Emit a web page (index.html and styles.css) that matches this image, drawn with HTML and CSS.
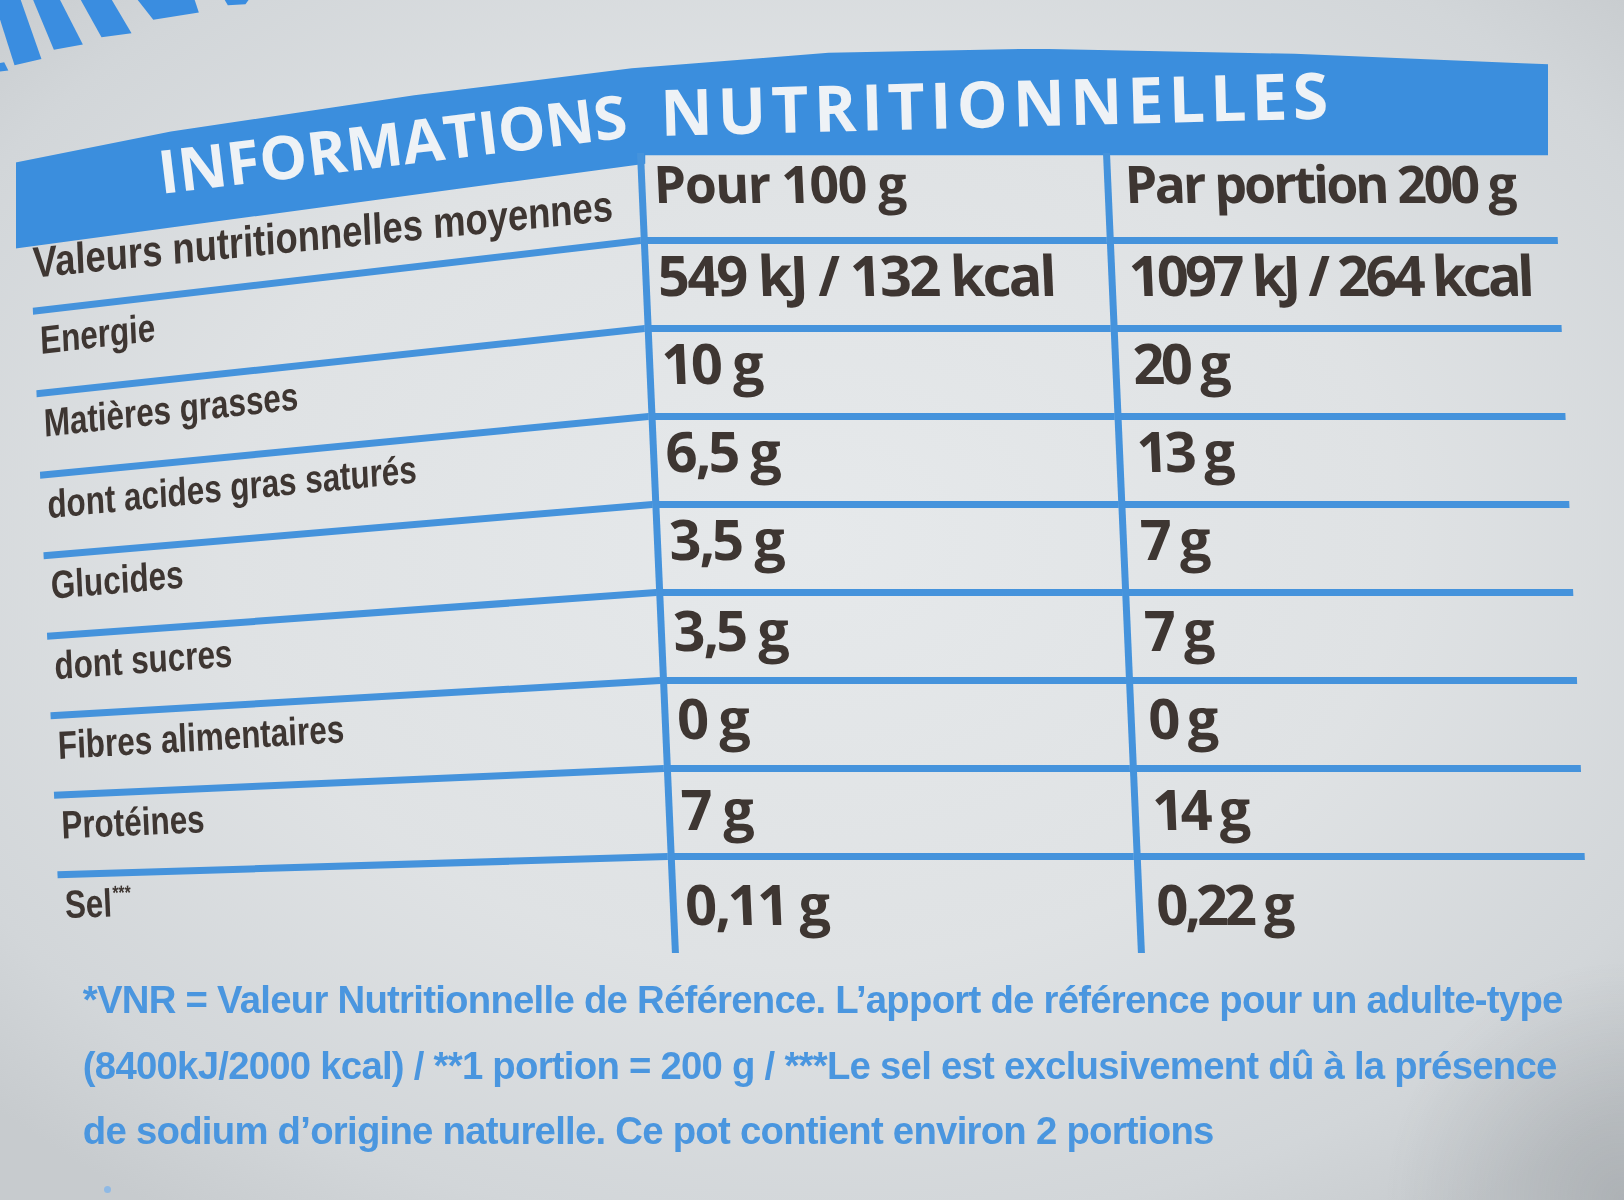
FILE: index.html
```
<!DOCTYPE html>
<html lang="fr">
<head>
<meta charset="utf-8">
<title>Informations nutritionnelles</title>
<link rel="stylesheet" href="styles.css">
</head>
<body>
<div class="page">
  <div class="top-deco">
    <svg class="stripes" width="240" height="70" viewBox="0 0 240 70">
      <polygon points="-6,0 20,0 40,57 14,63"/>
      <polygon points="32,0 58,0 80,43 52,48"/>
      <polygon points="78,0 108,0 127,32 98,36"/>
      <polygon points="133,0 188,0 192,12 148,19"/>
      <polygon points="217,0 240,0 237,4 220,5"/>
      <polygon points="-6,62 4,60 8,68 -6,70"/>
    </svg>
  </div>

  <div class="band">
    <span class="t1">INFORMATIONS</span>
    <span class="t2">NUTRITIONNELLES</span>
  </div>

  <div class="table">
    <div class="lab head k0"><span>Valeurs nutritionnelles moyennes</span></div>
    <div class="val c2 hv">Pour 100 g</div>
    <div class="val c3 hv">Par portion 200 g</div>

    <div class="lab k1"><span>Energie</span></div>
    <div class="val c2">549 kJ / 132 kcal</div>
    <div class="val c3">1097 kJ / 264 kcal</div>

    <div class="lab k2"><span>Matières grasses</span></div>
    <div class="val c2">10 g</div>
    <div class="val c3">20 g</div>

    <div class="lab k3"><span>dont acides gras saturés</span></div>
    <div class="val c2">6,5 g</div>
    <div class="val c3">13 g</div>

    <div class="lab k4"><span>Glucides</span></div>
    <div class="val c2">3,5 g</div>
    <div class="val c3">7 g</div>

    <div class="lab k5"><span>dont sucres</span></div>
    <div class="val c2 low1">3,5 g</div>
    <div class="val c3 low1">7 g</div>

    <div class="lab k6"><span>Fibres alimentaires</span></div>
    <div class="val c2 low1">0 g</div>
    <div class="val c3 low1">0 g</div>

    <div class="lab k7"><span>Protéines</span></div>
    <div class="val c2 low2">7 g</div>
    <div class="val c3 low2">14 g</div>

    <div class="lab k8"><span>Sel<sup class="ast">***</sup></span></div>
    <div class="val c2 low3">0,11 g</div>
    <div class="val c3 low3">0,22 g</div>
  </div>

  <div class="notes">
    <p>*VNR = Valeur Nutritionnelle de Référence. L’apport de référence pour un adulte-type</p>
    <p>(8400kJ/2000 kcal) / **1 portion = 200 g / ***Le sel est exclusivement dû à la présence</p>
    <p>de sodium d’origine naturelle. Ce pot contient environ 2 portions</p>
  </div>

  <div class="bottom-deco"><span class="dot"></span></div>
</div>
</body>
</html>
```

FILE: styles.css
```
html, body {
  margin: 0;
  padding: 0;
  background: #d2d5d7;
}

.page {
  width: 1568px;
  height: 1159px;
  zoom: 1.035714;
  overflow: hidden;
  font-family: "Open Sans", "DejaVu Sans", sans-serif;
  background:
    radial-gradient(circle at 100% 100%, rgba(80, 86, 92, 0.22) 0, rgba(80, 86, 92, 0) 230px),
    radial-gradient(ellipse 70% 68% at 50% 45%, #e6e9eb 0%, #dfe2e4 52%, #d2d6d9 85%, #c7cbce 100%);
  filter: blur(0.6px);
}

/* top-left decoration */
.top-deco {
  height: 47px;
}

.stripes {
  display: block;
  overflow: visible;
  fill: #3a8de0;
}

/* blue title band */
.band {
  margin-left: 15px;
  width: 1480px;
  height: 193px;
  margin-bottom: -92px;
  background: #3b8edd;
  clip-path: polygon(0 110px, 150px 80px, 385px 45px, 595px 19px, 785px 4px, 985px 0, 1235px 5px, 1480px 15px, 1480px 103px, 608px 103px, 608px 111px, 0 193px);
  display: flex;
  align-items: flex-start;
}

.t1, .t2 {
  display: inline-block;
  color: #eef2f6;
  font-weight: 700;
  line-height: 1;
  white-space: nowrap;
}

.t1 {
  font-size: 58px;
  margin: 89px 0 0 140px;
  transform-origin: 0 51px;
  transform: rotate(-6.9deg);
}

.t2 {
  font-size: 62px;
  letter-spacing: 5px;
  margin: 29px 0 0 28px;
  transform-origin: 0 55px;
  transform: rotate(-1.5deg);
}

/* nutrition table */
.table {
  margin-left: 25px;
  width: 1475px;
  display: grid;
  grid-template-columns: 590px 450px 435px;
  grid-template-rows: 81px repeat(7, 85px) 96px;
  transform: skewX(2.5deg);
  transform-origin: 0 0;
  color: #3e3632;
}

.lab {
  box-sizing: border-box;
  font-family: "Liberation Sans", Arial, sans-serif;
  font-weight: 700;
  font-size: 38px;
  line-height: 1;
  padding: 7px 0 0 6px;
  border-top: 7px solid #4593dc;
  transform-origin: 100% 0;
  white-space: nowrap;
}

.lab span {
  display: inline-block;
  transform: scaleX(0.8);
  transform-origin: 0 0;
}

.lab.head {
  border-top: 0;
  font-size: 42px;
  padding: 28px 0 0 2px;
}

.lab.head span {
  transform: scaleX(0.84);
}

.k0 { transform: skewY(-5.6deg); }
.k1 { transform: skewY(-6.6deg); }
.k2 { transform: skewY(-6.1deg); }
.k3 { transform: skewY(-5.5deg); }
.k4 { transform: skewY(-4.8deg); }
.k5 { transform: skewY(-4.1deg); }
.k6 { transform: skewY(-3.3deg); }
.k7 { transform: skewY(-2.5deg); }
.k8 { transform: skewY(-1.7deg); }

.ast {
  font-size: 0.5em;
  vertical-align: top;
  line-height: 1;
  margin-left: 1px;
}

.val {
  box-sizing: border-box;
  font-weight: 700;
  font-size: 54px;
  letter-spacing: -2.5px;
  line-height: 1;
  padding-top: 3px;
  border-left: 7px solid #4593dc;
  border-top: 7px solid #4593dc;
  white-space: nowrap;
}

.c2 { padding-left: 8px; }
.c3 { padding-left: 13px; letter-spacing: -3.8px; }

.low1 { padding-top: 6px; }
.low2 { padding-top: 9px; }
.low3 { padding-top: 15px; }

.val.hv {
  border-top: 0;
  font-size: 50px;
  letter-spacing: -1.5px;
  padding-top: 5px;
}

.val.c3.hv {
  letter-spacing: -2.8px;
}

/* footnotes */
.notes {
  margin: 14px 0 0 80px;
  font-family: "Liberation Sans", Arial, sans-serif;
  font-weight: 700;
  font-size: 37px;
  letter-spacing: -0.72px;
  line-height: 63px;
  color: #4a96df;
}

.notes p {
  margin: 0;
  white-space: nowrap;
}

.bottom-deco {
  padding: 22px 0 0 100px;
}

.dot {
  display: block;
  width: 7px;
  height: 7px;
  border-radius: 50%;
  background: #8fb9e4;
}
```
